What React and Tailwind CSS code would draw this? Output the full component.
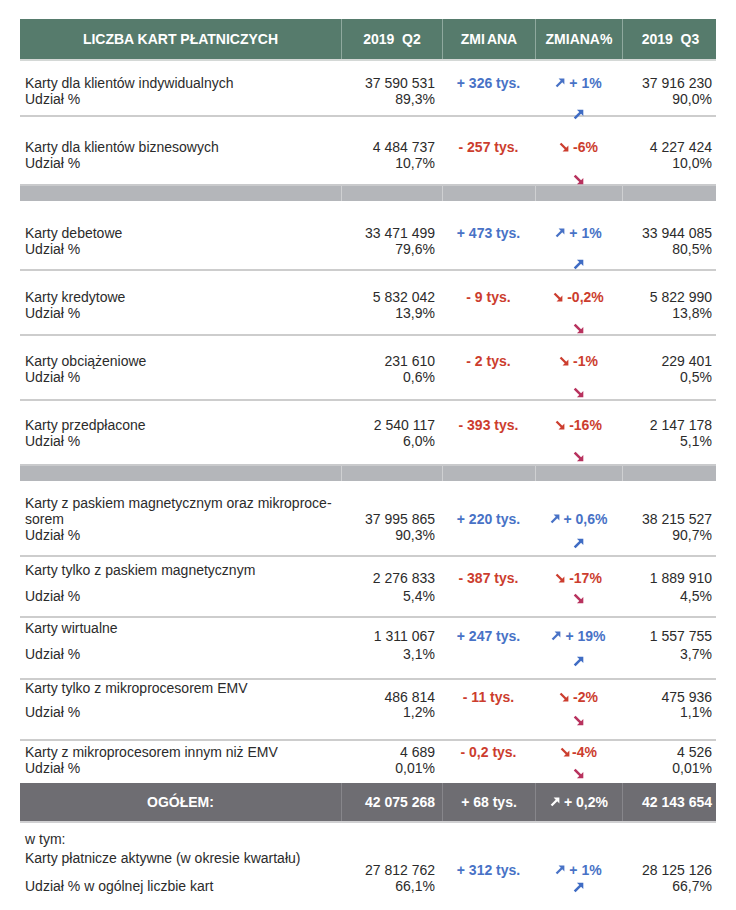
import React from "react";

const cols = "grid grid-cols-[321px_101px_93px_87px_96px]";

function Arrow({ up, className }) {
  return up ? (
    <svg viewBox="0 0 10 10" className={className}>
      <path d="M1.5 8.5 L7 3" stroke="currentColor" strokeWidth="2.3" />
      <polygon points="3.6,0.6 9.4,0.6 9.4,6.4" fill="currentColor" />
    </svg>
  ) : (
    <svg viewBox="0 0 10 10" className={className}>
      <path d="M1.5 1.5 L7 7" stroke="currentColor" strokeWidth="2.3" />
      <polygon points="9.4,3.6 9.4,9.4 3.6,9.4" fill="currentColor" />
    </svg>
  );
}

function Change({ up, text, tight }) {
  return (
    <span className={"inline-flex items-center " + (tight ? "gap-[2px]" : "gap-[4px]")}>
      <Arrow up={up} className="w-[10px] h-[10px]" />
      <span>{text}</span>
    </span>
  );
}

function clsx(...a) {
  return a.filter(Boolean).join(" ");
}

// one data row; class names for offsets are passed in full
function Row({
  h,
  label,
  border = true,
  lp = "pt-[13px]",
  l2 = "",
  np = "pt-[13px]",
  n2 = "",
  am = "mt-[18px]",
  q2,
  q2p,
  ch,
  pct,
  up,
  tight,
  q3,
  q3p,
}) {
  const tone = up ? "text-[#4872c6]" : "text-[#cc3d2e]";
  return (
    <div className={clsx(cols, h, border && "border-b-2 border-[#cdcdcd]")}>
      <div className={clsx("pl-[5px] leading-[16px]", lp)}>
        {label.map((t, i) => (
          <div key={i} className={i === label.length - 1 ? l2 : ""}>
            {t}
          </div>
        ))}
      </div>
      <div className={clsx("pr-[7px] text-right leading-[16px]", np)}>
        <div>{q2}</div>
        <div className={n2}>{q2p}</div>
      </div>
      <div className={clsx("text-center font-bold leading-[16px]", np, tone)}>
        {ch}
      </div>
      <div className={clsx("flex flex-col items-center font-bold leading-[16px]", np, tone)}>
        <Change up={up} text={pct} tight={tight} />
        <div className={clsx("h-[10px] flex items-center", am)}>
          <Arrow
            up={up}
            className={clsx("w-[11px] h-[11px]", up ? "text-[#3f6cc4]" : "text-[#b8325e]")}
          />
        </div>
      </div>
      <div className={clsx("pr-[6px] text-right leading-[16px]", np)}>
        <div>{q3}</div>
        <div className={n2}>{q3p}</div>
      </div>
    </div>
  );
}

function Bar() {
  return (
    <div className={clsx(cols, "h-[17px] bg-[#b4b6ba] border-t-2 border-[#c9cacc]")}>
      <div />
      <div className="border-l border-[#cfd0d2]" />
      <div className="border-l border-[#cfd0d2]" />
      <div className="border-l border-[#cfd0d2]" />
      <div className="border-l border-[#cfd0d2]" />
    </div>
  );
}

export default function App() {
  return (
    <div className="bg-white w-[736px] min-h-[910px] pt-[19px] px-[20px] text-[14px] text-[#2b2b2b] font-['Liberation_Sans',Arial,sans-serif]">
      {/* header */}
      <div
        className={clsx(
          cols,
          "h-[42px] bg-[#567b6c] text-white font-bold text-[14px] border-b-2 border-[#d4d8d6]",
        )}
      >
        <div className="flex items-center justify-center">LICZBA KART PŁATNICZYCH</div>
        <div className="flex items-center justify-center border-l border-[#8fa99e] whitespace-pre">
          2019  Q2
        </div>
        <div className="flex items-center justify-center border-l border-[#8fa99e]">
          ZMI<span className="ml-[2px]">ANA</span>
        </div>
        <div className="flex items-center justify-center border-l border-[#8fa99e]">ZMIANA%</div>
        <div className="flex items-center justify-center border-l border-[#8fa99e] whitespace-pre">
          2019  Q3
        </div>
      </div>

      <Row
        h="h-[56px]"
        label={["Karty dla klientów indywidualnych", "Udział %"]}
        lp="pt-[14px]"
        np="pt-[14px]"
        q2="37 590 531"
        q2p="89,3%"
        ch="+ 326 tys."
        pct="+ 1%"
        up
        q3="37 916 230"
        q3p="90,0%"
      />
      <Row
        h="h-[67px]"
        border={false}
        label={["Karty dla klientów biznesowych", "Udział %"]}
        lp="pt-[22px]"
        np="pt-[22px]"
        am="mt-[19px]"
        q2="4 484 737"
        q2p="10,7%"
        ch="- 257 tys."
        pct="-6%"
        q3="4 227 424"
        q3p="10,0%"
      />
      <Bar />

      <Row
        h="h-[70px]"
        label={["Karty debetowe", "Udział %"]}
        lp="pt-[24px]"
        np="pt-[24px]"
        q2="33 471 499"
        q2p="79,6%"
        ch="+ 473 tys."
        pct="+ 1%"
        up
        q3="33 944 085"
        q3p="80,5%"
      />
      <Row
        h="h-[65px]"
        label={["Karty kredytowe", "Udział %"]}
        lp="pt-[18px]"
        np="pt-[18px]"
        q2="5 832 042"
        q2p="13,9%"
        ch="- 9 tys."
        pct="-0,2%"
        q3="5 822 990"
        q3p="13,8%"
      />
      <Row
        h="h-[65px]"
        label={["Karty obciążeniowe", "Udział %"]}
        lp="pt-[17px]"
        np="pt-[17px]"
        q2="231 610"
        q2p="0,6%"
        ch="- 2 tys."
        pct="-1%"
        q3="229 401"
        q3p="0,5%"
      />
      <Row
        h="h-[63px]"
        border={false}
        label={["Karty przedpłacone", "Udział %"]}
        lp="pt-[16px]"
        np="pt-[16px]"
        q2="2 540 117"
        q2p="6,0%"
        ch="- 393 tys."
        pct="-16%"
        q3="2 147 178"
        q3p="5,1%"
      />
      <Bar />

      <Row
        h="h-[76px]"
        label={["Karty z paskiem magnetycznym oraz mikroproce-", "sorem", "Udział %"]}
        lp="pt-[14px]"
        np="pt-[30px]"
        am="mt-[11px]"
        q2="37 995 865"
        q2p="90,3%"
        ch="+ 220 tys."
        pct="+ 0,6%"
        up
        q3="38 215 527"
        q3p="90,7%"
      />
      <Row
        h="h-[61px]"
        label={["Karty tylko z paskiem magnetycznym", "Udział %"]}
        lp="pt-[5px]"
        l2="mt-[10px]"
        np="pt-[13px]"
        n2="mt-[2px]"
        am="mt-[7px]"
        q2="2 276 833"
        q2p="5,4%"
        ch="- 387 tys."
        pct="-17%"
        q3="1 889 910"
        q3p="4,5%"
      />
      <Row
        h="h-[62px]"
        label={["Karty wirtualne", "Udział %"]}
        lp="pt-[2px]"
        l2="mt-[10px]"
        np="pt-[10px]"
        n2="mt-[2px]"
        am="mt-[12px]"
        q2="1 311 067"
        q2p="3,1%"
        ch="+ 247 tys."
        pct="+ 19%"
        up
        q3="1 557 755"
        q3p="3,7%"
      />
      <Row
        h="h-[61px]"
        label={["Karty tylko z mikroprocesorem EMV", "Udział %"]}
        lp="pt-0"
        l2="mt-[8px]"
        np="pt-[9px]"
        n2="-mt-px"
        am="mt-[10px]"
        q2="486 814"
        q2p="1,2%"
        ch="- 11 tys."
        pct="-2%"
        q3="475 936"
        q3p="1,1%"
      />
      <Row
        h="h-[42px]"
        border={false}
        label={["Karty z mikroprocesorem innym niż EMV", "Udział %"]}
        lp="pt-[3px]"
        np="pt-[3px]"
        am="mt-[8px]"
        q2="4 689"
        q2p="0,01%"
        ch="- 0,2 tys."
        pct="-4%"
        tight
        q3="4 526"
        q3p="0,01%"
      />

      {/* total */}
      <div
        className={clsx(
          cols,
          "h-[40px] bg-[#6e6d72] text-white font-bold border-b-2 border-[#d0d0d2]",
        )}
      >
        <div className="flex items-center justify-center">OGÓŁEM:</div>
        <div className="flex items-center justify-end pr-[7px] border-l border-[#87868b]">
          42 075 268
        </div>
        <div className="flex items-center justify-center border-l border-[#87868b]">
          + 68 tys.
        </div>
        <div className="flex items-center justify-center border-l border-[#87868b]">
          <Change up text="+ 0,2%" />
        </div>
        <div className="flex items-center justify-end pr-[6px] border-l border-[#87868b]">
          42 143 654
        </div>
      </div>

      {/* w tym */}
      <div className={clsx(cols, "h-[80px]")}>
        <div className="pl-[5px] pt-[8px] leading-[16px]">
          <div>w tym:</div>
          <div className="mt-[3px]">Karty płatnicze aktywne (w okresie kwartału)</div>
          <div className="mt-[12px]">Udział % w ogólnej liczbie kart</div>
        </div>
        <div className="pr-[7px] pt-[39px] text-right leading-[16px]">
          <div>27 812 762</div>
          <div>66,1%</div>
        </div>
        <div className="pt-[39px] text-center font-bold leading-[16px] text-[#4872c6]">
          + 312 tys.
        </div>
        <div className="pt-[39px] flex flex-col items-center font-bold leading-[16px] text-[#4872c6]">
          <Change up text="+ 1%" />
          <div className="h-[10px] mt-[4px] flex items-center">
            <Arrow up className="w-[11px] h-[11px] text-[#3f6cc4]" />
          </div>
        </div>
        <div className="pr-[6px] pt-[39px] text-right leading-[16px]">
          <div>28 125 126</div>
          <div>66,7%</div>
        </div>
      </div>
    </div>
  );
}
